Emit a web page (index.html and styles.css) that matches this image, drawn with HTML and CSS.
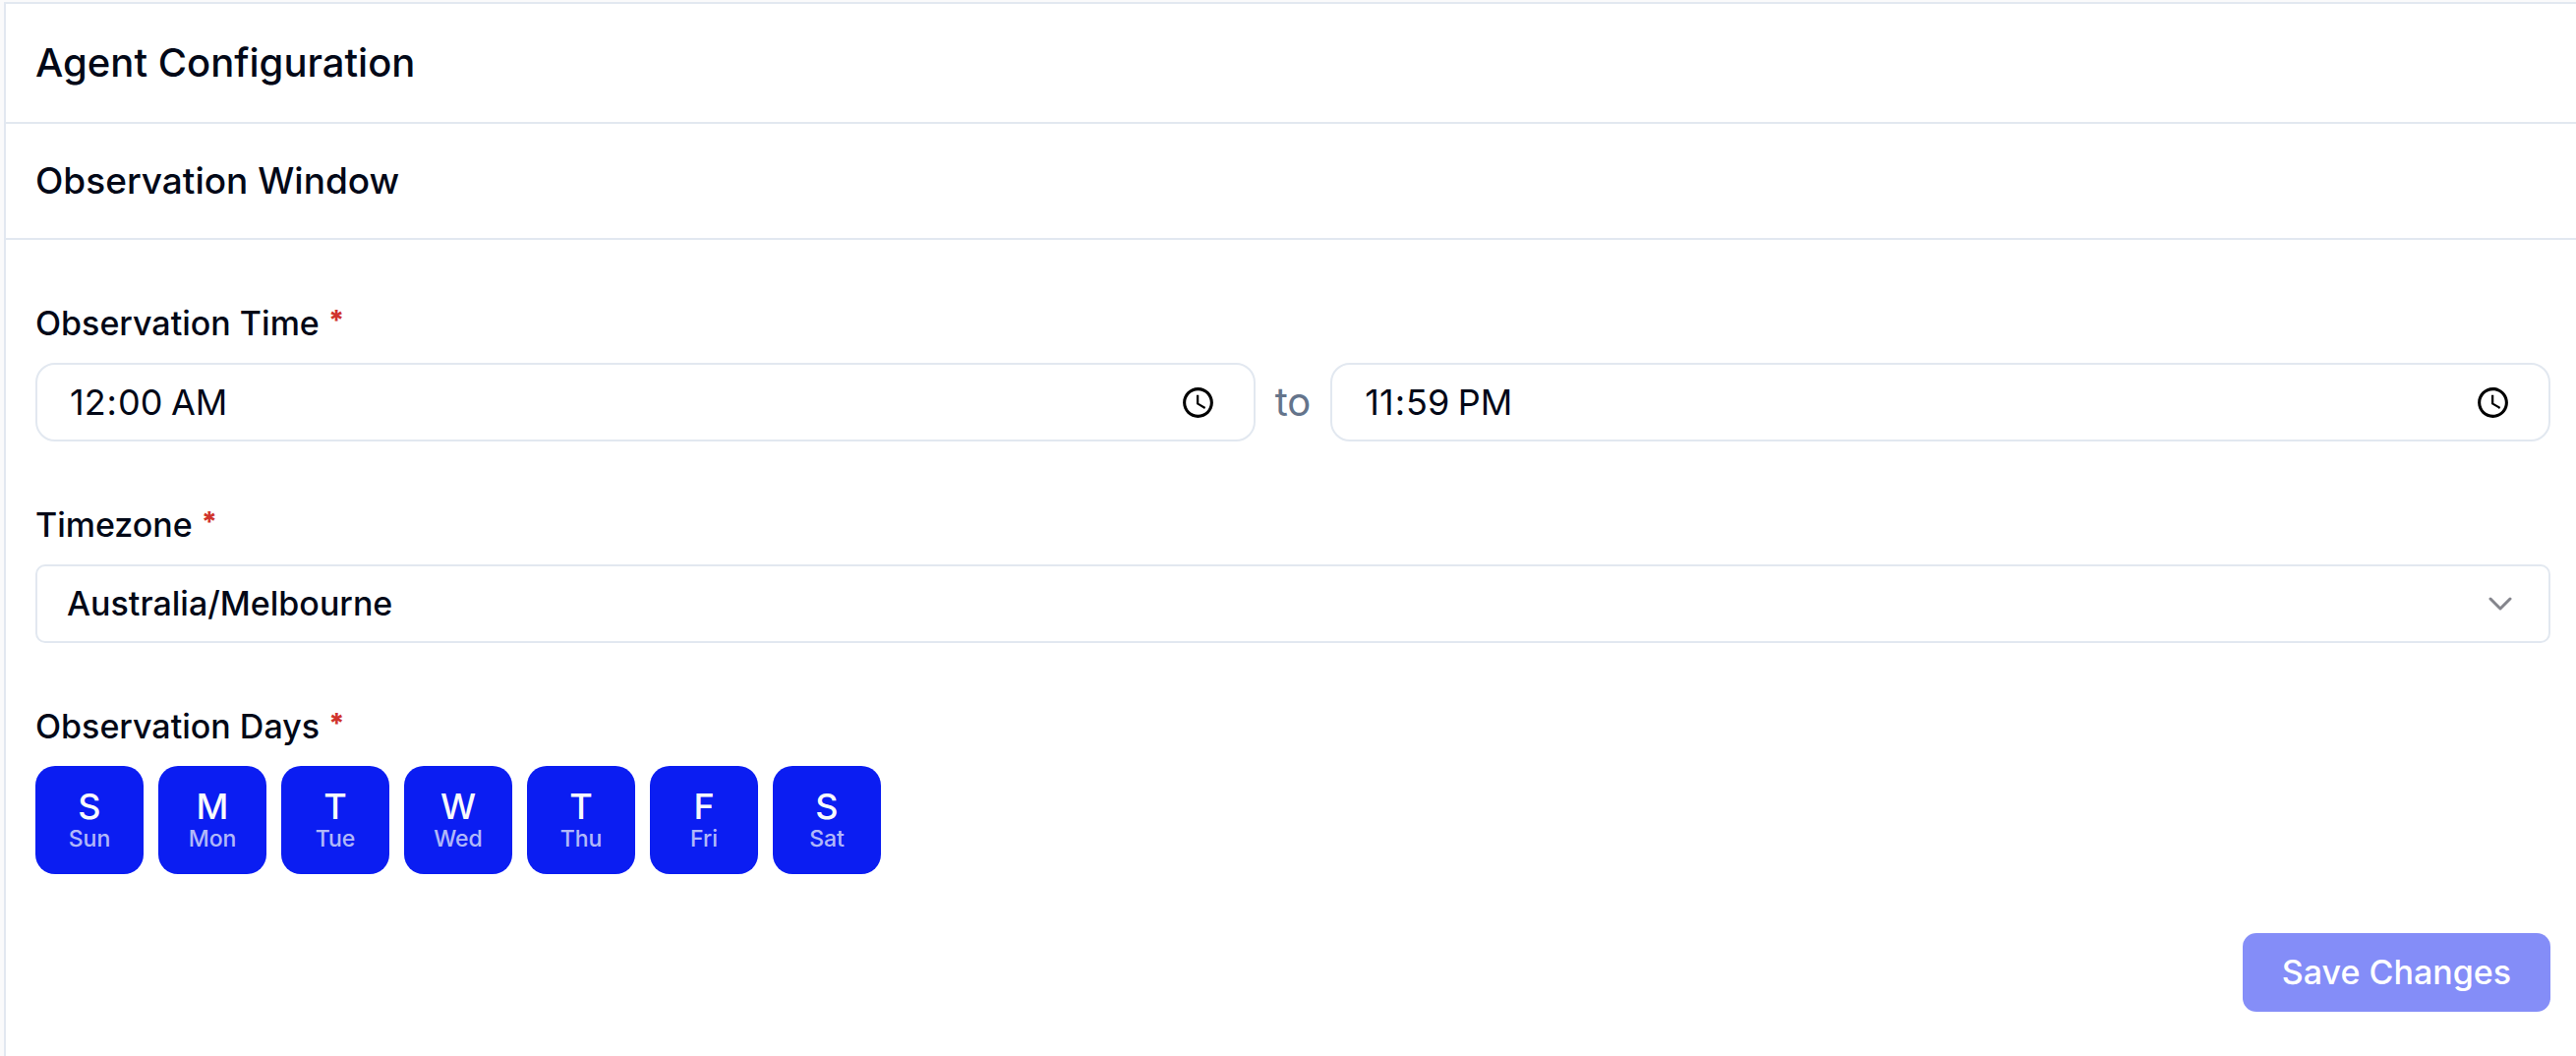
FILE: index.html
```html
<!DOCTYPE html>
<html lang="en">
<head>
    <meta charset="UTF-8">
    <title>Agent Configuration</title>
    <link rel="stylesheet" href="styles.css">
</head>
<body>
<main class="panel">
    <header class="panel-header">
        <h1>Agent Configuration</h1>
    </header>
    <div class="section-header">
        <h2>Observation Window</h2>
    </div>
    <form class="settings">
        <div class="field">
            <label for="startTime">Observation Time <span class="required">*</span></label>
            <div class="time-range">
                <input class="control time" type="time" id="startTime" value="00:00">
                <span class="to">to</span>
                <input class="control time" type="time" id="endTime" value="23:59" aria-label="End time">
            </div>
        </div>
        <div class="field">
            <label for="timezone">Timezone <span class="required">*</span></label>
            <div class="select-wrap">
                <select class="control select" id="timezone">
                    <option>Australia/Melbourne</option>
                </select>
                <svg class="chevron" viewBox="0 0 24 14" aria-hidden="true">
                    <path d="M2 2 L12 12 L22 2"/>
                </svg>
            </div>
        </div>
        <div class="field">
            <span class="label" id="daysLabel">Observation Days <span class="required">*</span></span>
            <div class="days" role="group" aria-labelledby="daysLabel">
                <button type="button" class="day" aria-pressed="true">S<small>Sun</small></button>
                <button type="button" class="day" aria-pressed="true">M<small>Mon</small></button>
                <button type="button" class="day" aria-pressed="true">T<small>Tue</small></button>
                <button type="button" class="day" aria-pressed="true">W<small>Wed</small></button>
                <button type="button" class="day" aria-pressed="true">T<small>Thu</small></button>
                <button type="button" class="day" aria-pressed="true">F<small>Fri</small></button>
                <button type="button" class="day" aria-pressed="true">S<small>Sat</small></button>
            </div>
        </div>
        <div class="actions">
            <button type="submit" class="save" disabled>Save Changes</button>
        </div>
    </form>
</main>
</body>
</html>
```
FILE: styles.css
```css
*{
    box-sizing: border-box;
    margin: 0;
    padding: 0;
}
body{
    min-height: 100vh;
    padding-top: 2px;
    background: #fafafb;
    color: #020817;
    font-family: Inter, "Liberation Sans", sans-serif;
    font-size: 34px;
    font-weight: 500;
    line-height: 40px;
    display: flex;
}
.panel{
    flex: 1;
    border-top: 2px solid #e2e8f0;
    border-left: 2px solid #e2e8f0;
    margin-left: 4px;
    background: #fff;
}
.panel-header,
.section-header{
    padding: 0 30px;
    border-bottom: 2px solid #e2e8f0;
}
.panel-header{
    padding-top: 36px;
    padding-bottom: 36px;
}
.section-header{
    padding-top: 34px;
    padding-bottom: 34px;
}
h1,
h2{
    font-weight: 500;
    line-height: 48px;
}
h1{
    font-size: 40px;
}
h2{
    font-size: 37px;
}
.settings{
    padding: 65px 26px 44px 30px;
}
.field{
    margin-bottom: 65px;
}
.field label,
.label{
    display: block;
    margin-bottom: 20px;
}
.required{
    color: #d0342c;
    font-size: 28px;
    font-weight: 800;
    line-height: 20px;
    vertical-align: 5px;
}
.time-range{
    display: flex;
    align-items: center;
    gap: 20px;
}
.control{
    width: 100%;
    height: 80px;
    border: 2px solid #e2e8f0;
    background: #fff;
    color: #020817;
    font: inherit;
}
.time{
    flex: 1;
    min-width: 0;
    padding: 0 38px 0 32px;
    border-radius: 20px;
    font-size: 36px;
    font-weight: 400;
}
.time::-webkit-calendar-picker-indicator{
    width: 37px;
    height: 37px;
    padding: 0;
}
.to{
    color: #64748b;
    font-size: 40px;
    font-weight: 400;
}
.select-wrap{
    position: relative;
}
.select{
    appearance: none;
    padding: 0 30px;
    border-radius: 10px;
}
.chevron{
    position: absolute;
    right: 39px;
    top: 33px;
    width: 24px;
    height: 14px;
    fill: none;
    stroke: #84858c;
    stroke-width: 3;
    stroke-linecap: round;
    stroke-linejoin: round;
    pointer-events: none;
}
.days{
    display: flex;
    gap: 15px;
}
.day{
    display: flex;
    flex-direction: column;
    align-items: center;
    justify-content: center;
    width: 110px;
    height: 110px;
    padding-top: 2px;
    border: none;
    border-radius: 20px;
    background: #0b1df2;
    color: #f8fafc;
    font: inherit;
    font-size: 36px;
    line-height: 36px;
}
.day small{
    font-size: 23px;
    line-height: 30px;
    opacity: .7;
}
.actions{
    display: flex;
    justify-content: flex-end;
    margin-top: -5px;
}
.save{
    height: 80px;
    padding: 0 40px;
    border: none;
    border-radius: 14px;
    background: #0b1df2;
    color: #fff;
    font: inherit;
    opacity: .5;
}
```
